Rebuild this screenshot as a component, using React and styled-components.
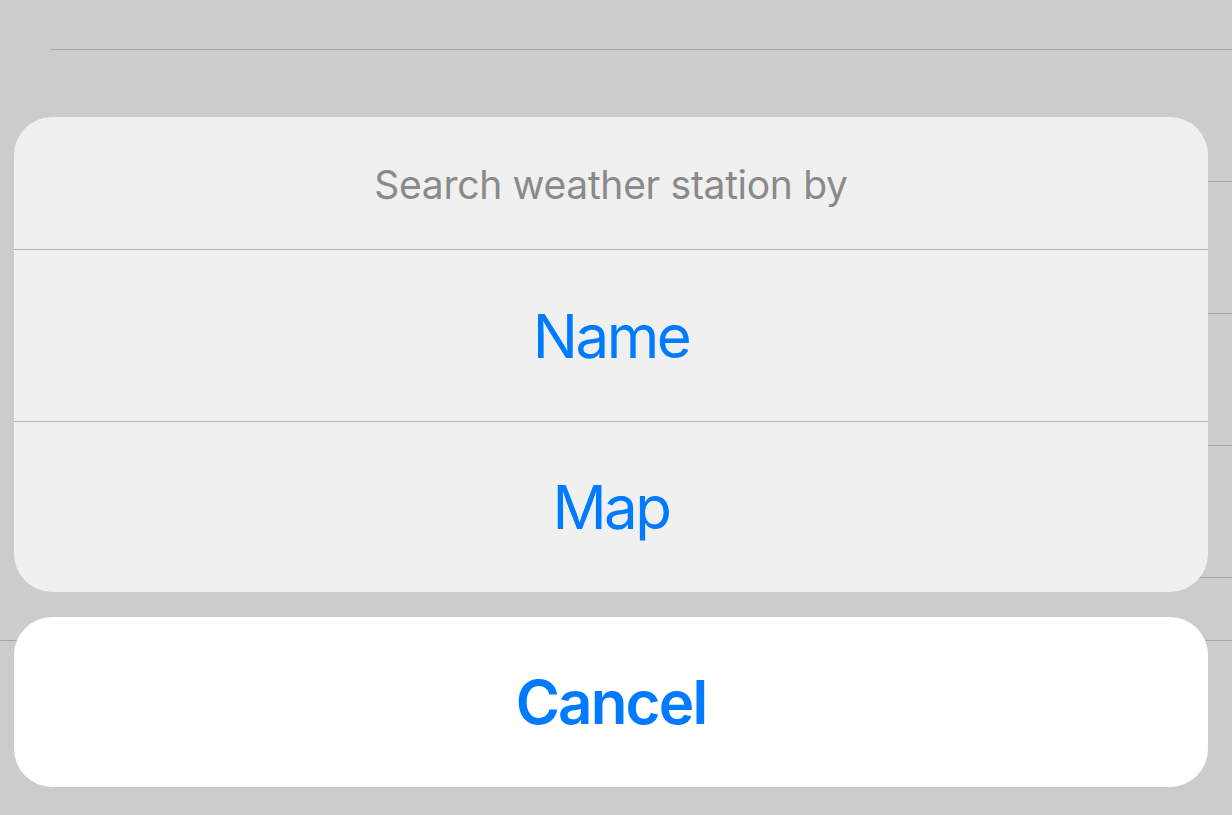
import React from "react";
import styled, { createGlobalStyle } from "styled-components";

const Global = createGlobalStyle`
  html, body { margin: 0; padding: 0; }
  body {
    background: #cccccc;
    font-family: Inter, "Noto Sans", "Liberation Sans", sans-serif;
    -webkit-font-smoothing: antialiased;
  }
`;

const Screen = styled.div`
  position: relative;
  width: 1232px;
  height: 815px;
  overflow: hidden;
  background: #cccccc;
`;

const List = styled.div`
  display: flex;
  flex-direction: column;
`;

const ListRow = styled.div`
  height: ${(p) => p.$h}px;
  margin-left: ${(p) => (p.$full ? 0 : 50)}px;
  border-bottom: 1px solid #a4a4a4;
`;

const Overlay = styled.div`
  position: absolute;
  left: 14px;
  right: 24px;
  bottom: 28px;
  display: flex;
  flex-direction: column;
  gap: 25px;
`;

const Group = styled.div`
  background: ${(p) => (p.$white ? "#ffffff" : "#f0f0f0")};
  border-radius: 38px;
  overflow: hidden;
  display: flex;
  flex-direction: column;
`;

const Title = styled.div`
  height: 133px;
  display: flex;
  align-items: center;
  justify-content: center;
  font-size: 39px;
  color: #8a8a8a;
  letter-spacing: -0.3px;
  padding-top: 2px;
  box-sizing: border-box;
  border-bottom: 1px solid #b4b4b4;
`;

const Action = styled.div`
  height: ${(p) => p.$h}px;
  display: flex;
  align-items: center;
  justify-content: center;
  font-size: 60px;
  font-weight: ${(p) => (p.$bold ? 600 : 400)};
  color: #007aff;
  letter-spacing: ${(p) => (p.$bold ? "-1.8px" : "-2.5px")};
  border-bottom: ${(p) => (p.$sep ? "1px solid #b4b4b4" : "none")};
`;

export default function App() {
  return (
    <Screen>
      <Global />
      <List>
        <ListRow $h={49} />
        <ListRow $h={131} />
        <ListRow $h={131} />
        <ListRow $h={131} />
        <ListRow $h={131} />
        <ListRow $h={62} $full />
      </List>
      <Overlay>
        <Group>
          <Title>Search weather station by</Title>
          <Action $h={171} $sep>Name</Action>
          <Action $h={170}>Map</Action>
        </Group>
        <Group $white>
          <Action $h={170} $bold>Cancel</Action>
        </Group>
      </Overlay>
    </Screen>
  );
}
